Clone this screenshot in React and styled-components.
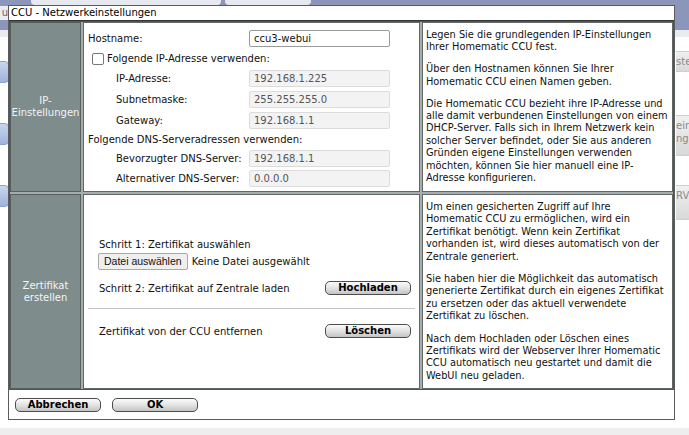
import React from 'react';
import styled, { createGlobalStyle } from 'styled-components';

const GlobalStyle = createGlobalStyle`
  html, body { margin: 0; padding: 0; background: #ffffff; }
  body { font-family: "DejaVu Sans", Verdana, sans-serif; font-size: 10px; color: #111; }
`;

const ipHelp = [
  ['Legen Sie die grundlegenden IP-Einstellungen', 'Ihrer Homematic CCU fest.'],
  ['Über den Hostnamen können Sie Ihrer', 'Homematic CCU einen Namen geben.'],
  [
    'Die Homematic CCU bezieht ihre IP-Adresse und',
    'alle damit verbundenen Einstellungen von einem',
    'DHCP-Server. Falls sich in Ihrem Netzwerk kein',
    'solcher Server befindet, oder Sie aus anderen',
    'Gründen eigene Einstellungen verwenden',
    'möchten, können Sie hier manuell eine IP-',
    'Adresse konfigurieren.',
  ],
];

const certHelp = [
  [
    'Um einen gesicherten Zugriff auf Ihre',
    'Homematic CCU zu ermöglichen, wird ein',
    'Zertifikat benötigt. Wenn kein Zertifikat',
    'vorhanden ist, wird dieses automatisch von der',
    'Zentrale generiert.',
  ],
  [
    'Sie haben hier die Möglichkeit das automatisch',
    'generierte Zertifikat durch ein eigenes Zertifikat',
    'zu ersetzen oder das aktuell verwendete',
    'Zertifikat zu löschen.',
  ],
  [
    'Nach dem Hochladen oder Löschen eines',
    'Zertifikats wird der Webserver Ihrer Homematic',
    'CCU automatisch neu gestartet und damit die',
    'WebUI neu geladen.',
  ],
];

/* ---------- page behind the dialog ---------- */

const Page = styled.div`
  position: relative;
  width: 689px;
  height: 435px;
  overflow: hidden;
  display: flex;
  flex-direction: column;
  background: #fff;
`;

const Header = styled.div`
  height: 30px;
  background: #8c95ba;
  display: flex;
  align-items: flex-start;
`;

const MenuChip = styled.div`
  width: 8px;
  height: 14px;
  margin-top: 6px;
  background: #e9ecf2;
  color: #666;
  font-size: 10px;
  line-height: 14px;
  text-align: right;
  overflow: hidden;
`;

const HeaderTab = styled.div`
  width: ${p => p.w}px;
  height: 5px;
  margin-left: ${p => p.ml}px;
  background: #e7e9f1;
  border-radius: 0 0 4px 4px;
`;

const SubBar = styled.div`
  height: 7px;
  background: #e8ebf0;
`;

const PageBody = styled.div`
  flex: 1;
  display: flex;
  justify-content: space-between;
`;

const SideIcons = styled.div`
  width: 8px;
  display: flex;
  flex-direction: column;
  gap: 40px;
  padding-top: 24px;
`;

const SideIcon = styled.div`
  width: 14px;
  height: 20px;
  margin-left: -7px;
  border-radius: 4px;
  background: linear-gradient(#c8d6ee, #9fb4da);
  border: 1px solid #8ea4cc;
`;

const SideButtons = styled.div`
  width: 13px;
  display: flex;
  flex-direction: column;
  gap: 12px;
  padding-top: 14px;
`;

const SideButton = styled.div`
  height: ${p => p.h}px;
  margin-top: ${p => p.mt || 0}px;
  background: linear-gradient(#f0f0f0, #d9d9d9);
  border-top: 1px solid #cfcfcf;
  border-bottom: 1px solid #cfcfcf;
  color: #8a8a8a;
  font-size: 10px;
  line-height: 13px;
  padding-top: 3px;
  white-space: nowrap;
  overflow: hidden;
`;

const FooterStrip = styled.div`
  height: 7px;
  background: #eeeeee;
`;

/* ---------- dialog ---------- */

const Dialog = styled.div`
  position: absolute;
  left: 8px;
  top: 5px;
  width: 665px;
  background: #fff;
  border: 1px solid #5b5b5b;
  display: flex;
  flex-direction: column;
`;

const Title = styled.div`
  height: 14px;
  line-height: 14px;
  padding-left: 2px;
  font-size: 10px;
  color: #000;
  border-bottom: 1px solid #333;
`;

const Grid = styled.div`
  display: grid;
  grid-template-columns: 71px 337px 1fr;
  grid-template-rows: 170px 195px;
  gap: 2px;
  background: #a6adad;
  border: 1px solid #4e5757;
`;

const SideCell = styled.div`
  background: #7f8c8c;
  border: 1px solid #56605f;
  color: #f2f5f5;
  display: flex;
  align-items: center;
  justify-content: center;
  text-align: center;
  line-height: 12px;
`;

const MainCell = styled.div`
  background: #fff;
  border: 1px solid #5f6767;
  display: flex;
  flex-direction: column;
  padding: ${p => p.pad || '0'};
`;

const InfoCell = styled.div`
  background: #fff;
  border: 1px solid #5f6767;
  padding: 6px 3px 0 3px;
  font-size: 9.8px;
  line-height: 12.4px;
  color: #111;
  white-space: nowrap;
  overflow: hidden;
`;

const Para = styled.p`
  margin: 0 0 ${p => p.gap}px 0;
`;

const Line = styled.span`
  display: block;
`;

const FormRow = styled.div`
  height: ${p => p.h || 21}px;
  display: flex;
  align-items: center;
  padding-left: ${p => p.indent || 0}px;
`;

const Label = styled.div`
  width: ${p => p.w}px;
  flex-shrink: 0;
`;

const TextInput = styled.input`
  width: 141px;
  height: 17px;
  box-sizing: border-box;
  padding: 0 4px;
  font-family: "DejaVu Sans", Verdana, sans-serif;
  font-size: 10px;
  color: ${p => (p.disabled ? '#555' : '#111')};
  background: ${p => (p.disabled ? '#f3f3f3' : '#fff')};
  border: 1px solid ${p => (p.disabled ? '#dcdcdc' : '#9a9a9a')};
  border-radius: 2px;
  outline: none;
`;

const Check = styled.span`
  width: 10px;
  height: 10px;
  border: 1px solid #777;
  border-radius: 2px;
  background: #fff;
  margin: 0 3px 0 4px;
`;

const CertBlock = styled.div`
  padding: 0 8px 0 15px;
  display: flex;
  flex-direction: column;
`;

const StepLine = styled.div`
  height: ${p => p.h || 14}px;
  margin-top: ${p => p.mt || 0}px;
  display: flex;
  align-items: center;
  justify-content: space-between;
`;

const FileRow = styled.div`
  height: 20px;
  display: flex;
  align-items: center;
  gap: 4px;
  margin-left: -1px;
`;

const FileButton = styled.button`
  height: 17px;
  padding: 0 5px;
  font-family: "Liberation Sans", Arial, sans-serif;
  font-size: 10.5px;
  color: #111;
  background: #efefef;
  border: 1px solid #a9a9a9;
  border-radius: 2px;
`;

const Divider = styled.hr`
  margin: 9px 4px 11px 4px;
  border: 0;
  border-top: 1px solid #c4c4c4;
`;

const PillButton = styled.button`
  width: 86px;
  height: 14px;
  padding: 0;
  font-family: "DejaVu Sans", Verdana, sans-serif;
  font-size: 10px;
  font-weight: bold;
  color: #000;
  line-height: 12px;
  border: 1px solid #4d4d4d;
  border-radius: 5px;
  background: linear-gradient(#fbfbfb 0%, #e3e3e3 50%, #c4c4c4 100%);
`;

const Footer = styled.div`
  height: 29px;
  display: flex;
  align-items: center;
  gap: 11px;
  padding-left: 6px;
`;

function Help({ paras, gap }) {
  return paras.map((lines, i) => (
    <Para key={i} gap={gap}>
      {lines.map(l => <Line key={l}>{l}</Line>)}
    </Para>
  ));
}

export default function App() {
  return (
    <>
      <GlobalStyle />
      <Page>
        <Header>
          <MenuChip>u</MenuChip>
          <HeaderTab w={190} ml={23} />
          <HeaderTab w={86} ml={4} />
        </Header>
        <SubBar />
        <PageBody>
          <SideIcons>
            <SideIcon />
            <SideIcon />
            <SideIcon />
          </SideIcons>
          <SideButtons>
            <SideButton h={16}>stel</SideButton>
            <SideButton h={36} mt={31}>ein<br />ng</SideButton>
            <SideButton h={30} mt={17}>RVI</SideButton>
          </SideButtons>
        </PageBody>
        <FooterStrip />

        <Dialog>
          <Title>CCU - Netzwerkeinstellungen</Title>
          <Grid>
            <SideCell>IP-<br />Einstellungen</SideCell>
            <MainCell pad="5px 0 0 4px">
              <FormRow>
                <Label w={161}>Hostname:</Label>
                <TextInput defaultValue="ccu3-webui" />
              </FormRow>
              <FormRow h={19}>
                <Check />
                <span>Folgende IP-Adresse verwenden:</span>
              </FormRow>
              <FormRow indent={28}>
                <Label w={133}>IP-Adresse:</Label>
                <TextInput disabled defaultValue="192.168.1.225" />
              </FormRow>
              <FormRow indent={28}>
                <Label w={133}>Subnetmaske:</Label>
                <TextInput disabled defaultValue="255.255.255.0" />
              </FormRow>
              <FormRow indent={28}>
                <Label w={133}>Gateway:</Label>
                <TextInput disabled defaultValue="192.168.1.1" />
              </FormRow>
              <FormRow h={17}>Folgende DNS-Serveradressen verwenden:</FormRow>
              <FormRow h={20} indent={28}>
                <Label w={133}>Bevorzugter DNS-Server:</Label>
                <TextInput disabled defaultValue="192.168.1.1" />
              </FormRow>
              <FormRow h={20} indent={28}>
                <Label w={133}>Alternativer DNS-Server:</Label>
                <TextInput disabled defaultValue="0.0.0.0" />
              </FormRow>
            </MainCell>
            <InfoCell>
              <Help paras={ipHelp} gap={9.5} />
            </InfoCell>

            <SideCell>Zertifikat<br />erstellen</SideCell>
            <MainCell pad="42px 0 0 0">
              <CertBlock>
                <StepLine>Schritt 1: Zertifikat auswählen</StepLine>
                <FileRow>
                  <FileButton>Datei auswählen</FileButton>
                  <span>Keine Datei ausgewählt</span>
                </FileRow>
                <StepLine h={22} mt={6}>
                  <span>Schritt 2: Zertifikat auf Zentrale laden</span>
                  <PillButton>Hochladen</PillButton>
                </StepLine>
              </CertBlock>
              <Divider />
              <CertBlock>
                <StepLine h={22}>
                  <span>Zertifikat von der CCU entfernen</span>
                  <PillButton>Löschen</PillButton>
                </StepLine>
              </CertBlock>
            </MainCell>
            <InfoCell>
              <Help paras={certHelp} gap={10} />
            </InfoCell>
          </Grid>
          <Footer>
            <PillButton>Abbrechen</PillButton>
            <PillButton>OK</PillButton>
          </Footer>
        </Dialog>
      </Page>
    </>
  );
}
